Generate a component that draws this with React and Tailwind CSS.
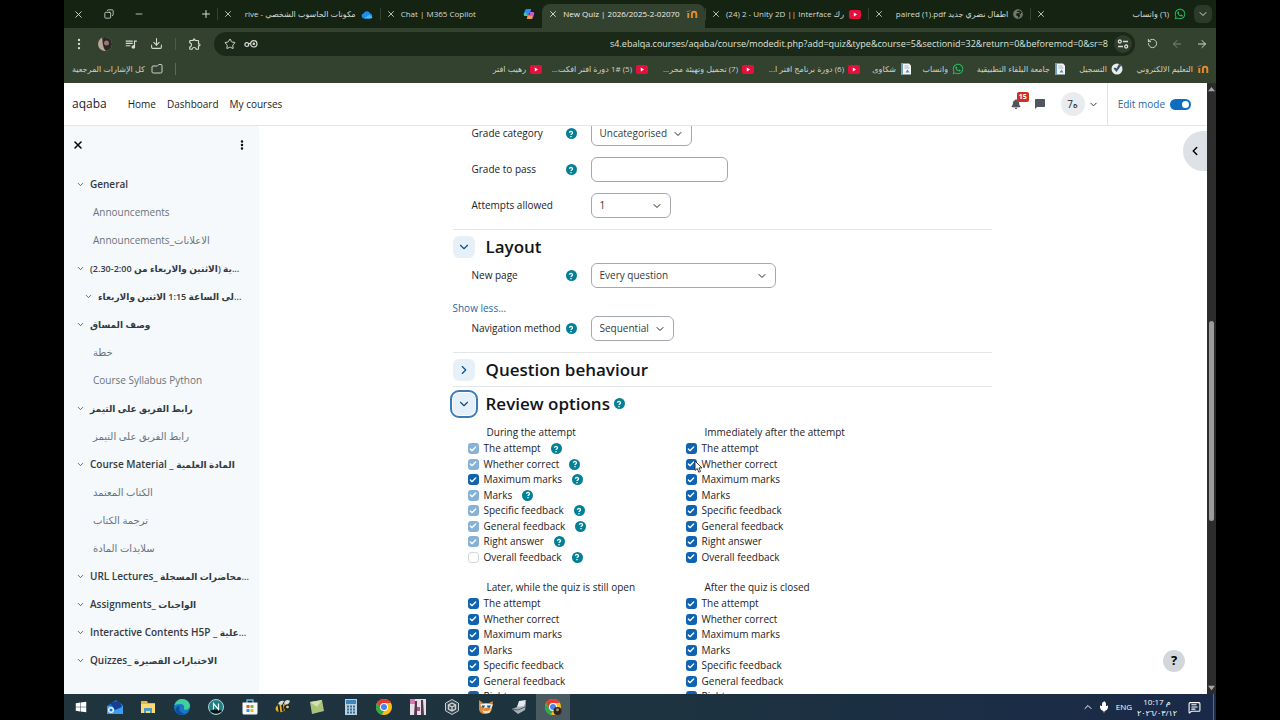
import React from "react";
import {
  X, Minus, Plus, Copy, ChevronDown, ChevronRight, ChevronLeft, ChevronUp, EllipsisVertical,
  Star, RotateCcw, ArrowRight, ArrowLeft, Folder, Check, Mic, MessageSquareText,
} from "lucide-react";
import { FaWhatsapp, FaYoutube, FaWindows, FaBell, FaGlobeAfrica } from "react-icons/fa";
import { MdChatBubble, MdOutlineExtension, MdQueueMusic } from "react-icons/md";
import { LuDownload } from "react-icons/lu";

/* ---------- small drawings ---------- */

const YouTube = () => (
  <svg viewBox="0 0 12 9" className="h-[9px] w-3 shrink-0">
    <rect width="12" height="9" rx="2" fill="#e60f3c" />
    <path d="M4.8 2.6v3.8L8 4.5z" fill="#fff" />
  </svg>
);

const Moodle = () => (
  <svg viewBox="0 0 12 10" className="h-[10px] w-3 shrink-0" fill="none" stroke="#e98a2b" strokeWidth="1.900">
    <path d="M2.300 4V9M5.900 9V5a2.200 2.200 0 0 1 4.400 0V9" />
    <path d="M0.400 2.800L4.600 1.500" stroke="#77776a" strokeWidth="1" />
  </svg>
);

const OneDrive = () => (
  <svg viewBox="0 0 12 9" className="h-[9px] w-3 shrink-0">
    <path d="M3 8.500a2.700 2.700 0 0 1-.3-5.300A3.600 3.600 0 0 1 9.300 3.500 2.600 2.600 0 0 1 9.400 8.500z" fill="#1d8df0" />
    <path d="M3 8.500 8 4.800l3.500 2.400A2.400 2.400 0 0 1 9.400 8.500z" fill="#45b9ff" />
  </svg>
);

const CopilotLogo = () => (
  <svg viewBox="0 0 12 12" className="size-3 shrink-0">
    <path d="M4 1h4.200l-1 3.400c-.4 1.300-.8 2.300-1.600 3.600H2C.8 8 .6 6.800 1 5.500l1-3C2.400 1.500 3 1 4 1z" fill="#2b8df5" />
    <path d="M1 5.500 2.500 4l2.500 4H2C.8 8 .6 6.800 1 5.500z" fill="#41c9a4" />
    <path d="M8 11H3.800l1-3.400C5.200 6.300 5.600 5.300 6.400 4H10c1.200 0 1.400 1.200 1 2.500l-1 3C9.600 10.500 9 11 8 11z" fill="#c65bd9" />
    <path d="M8 11H3.800l1-3.400 4.700.7-.5 1.900c-.2.500-.5.800-1 .8z" fill="#f59a4b" />
    <path d="m5.300 6.800 1.100-2.300.9.200-1 2.600z" fill="#33412f" />
  </svg>
);

const DocIcon = () => (
  <svg viewBox="0 0 12 12" className="size-3 shrink-0">
    <path d="M1 .5h8l2 2v9H1z" fill="#f3f6f7" />
    <path d="M1 .5h2v11H1z" fill="#6f9dc4" />
    <path d="M4.500 3h4M4.500 5h5" stroke="#a9b6be" />
    <path d="m5.500 9.500 2-3 2 3z" fill="#5b86b5" />
  </svg>
);

const Registration = () => (
  <svg viewBox="0 0 12 12" className="size-3 shrink-0">
    <circle cx="6" cy="6" r="5.500" fill="#e8ecee" />
    <path d="M2.500 5.500 5.500 9l5-7A5.500 5.500 0 0 0 8 1L5.500 5.500l-1.500-1z" fill="#3d5568" />
  </svg>
);

const SiteSettings = () => (
  <svg viewBox="0 0 12 10" className="h-[10px] w-3" fill="none" stroke="currentColor" strokeWidth="1.300">
    <circle cx="2.800" cy="2.500" r="1.500" />
    <path d="M6 2.500h5M1 7.500h5" />
    <circle cx="9.200" cy="7.500" r="1.500" />
  </svg>
);

const PassKey = () => (
  <svg viewBox="0 0 14 10" className="h-[10px] w-[14px]" fill="none" stroke="currentColor" strokeWidth="1.200">
    <circle cx="2.800" cy="5.600" r="1.900" />
    <path d="M4.700 4.500h2" />
    <circle cx="9.800" cy="4.800" r="3.200" />
    <circle cx="9.800" cy="4.800" r=".7" fill="currentColor" />
  </svg>
);

const ChromeLogo = ({ badge }) => (
  <svg viewBox="0 0 18 18" className="size-[18px]">
    <circle cx="9" cy="9" r="8" fill="#fbc116" />
    <path d="M2.070 5A8 8 0 0 1 15.930 5H9L5.500 11z" fill="#e33b2e" />
    <path d="M2.070 5 5.540 11 9 13l-2.300 3.900A8 8 0 0 1 2.070 5z" fill="#2da94f" />
    <circle cx="9" cy="9" r="4" fill="#fff" />
    <circle cx="9" cy="9" r="3" fill="#4285f4" />
    {badge && <circle cx="13.500" cy="13" r="4" fill="#2a2523" />}
    {badge && <circle cx="13.500" cy="11.800" r="1.500" fill="#b28d76" />}
  </svg>
);

const Help = () => (
  <button type="button" aria-label="Help" className="grid size-[11px] shrink-0 place-items-center rounded-full bg-[#008196]">
    <svg viewBox="0 0 8 8" className="size-2" fill="none" stroke="#fff" strokeWidth="1.300">
      <path d="M2.500 2.800a1.500 1.400 0 1 1 2.300 1.200c-.6.400-.8.500-.8 1.100M4 6v1.200" />
    </svg>
  </button>
);

/* ---------- browser frame ---------- */

const tabs = [
  { title: "(٦) واتساب", dir: "rtl", icon: <FaWhatsapp className="size-3 shrink-0 text-[#27c062]" /> },
  { title: "اطفال نضري جديد paired (1).pdf", dir: "rtl", icon: <FaGlobeAfrica className="size-[10px] shrink-0 text-[#6f7a6d]" /> },
  { title: "(24) 2 - Unity 2D || Interface رك", dir: "ltr", icon: <YouTube /> },
  { title: "New Quiz | 2026/2025-2-02070", dir: "ltr", icon: <Moodle />, active: true },
  { title: "Chat | M365 Copilot", dir: "ltr", icon: <CopilotLogo /> },
  { title: "مكونات الحاسوب الشخصي - rive", dir: "rtl", icon: <OneDrive /> },
];

function TabStrip() {
  return (
    <div dir="rtl" className="flex h-7 shrink-0 items-center bg-[#152313] text-[#d5dbd2]">
      <button aria-label="Search tabs" className="mr-1 ml-[1px] grid size-[18px] place-items-center rounded-md bg-[#2c3a2a]">
        <ChevronDown className="size-3" />
      </button>
      <div role="tablist" className="flex h-full min-w-0 flex-1 items-end">
        {tabs.map((t) => (
          <div
            key={t.title}
            role="tab"
            aria-selected={!!t.active}
            className={
              "flex h-6 min-w-0 flex-1 items-center gap-[5px] pr-[7px] pb-1 pl-[6px] text-[8px] " +
              (t.active ? "rounded-t-lg bg-[#33412f] text-[#edf0eb]" : "")
            }
          >
            {t.icon}
            <span dir={t.dir} className="min-w-0 flex-1 whitespace-nowrap">{t.title}</span>
            <button aria-label="Close tab"><X className="size-[10px]" /></button>
            {!t.active && <span className="-ml-[6px] h-3 w-px bg-[#35432f]" />}
          </div>
        ))}
      </div>
      <button aria-label="New tab" className="ml-[56px] pr-[5px]"><Plus className="size-3" /></button>
      <div className="flex items-center gap-5 pl-[9px]">
        <button aria-label="Minimise"><Minus className="size-[10px]" /></button>
        <button aria-label="Restore"><Copy className="size-[10px] -scale-x-100" /></button>
        <button aria-label="Close"><X className="size-[11px]" /></button>
      </div>
    </div>
  );
}

function Toolbar() {
  return (
    <div dir="rtl" className="flex h-[31px] shrink-0 items-center bg-[#33412f] text-[#d5dbd2]">
      <div className="flex items-center gap-[13px] pr-2 pl-3">
        <button aria-label="Back"><ArrowRight className="size-3" /></button>
        <button aria-label="Forward" className="text-[#7c8778]"><ArrowLeft className="size-3" /></button>
        <button aria-label="Reload"><RotateCcw className="size-[11px]" /></button>
      </div>
      <div className="flex h-6 min-w-0 flex-1 items-center gap-2 rounded-full bg-[#1b2919] pr-[3px] pl-[10px]">
        <button aria-label="Site settings" className="-ml-[2px] grid size-[18px] place-items-center rounded-full bg-[#2f3d2c]">
          <SiteSettings />
        </button>
        <input
          aria-label="Address"
          dir="ltr"
          className="min-w-0 flex-1 bg-transparent text-right text-[9px] text-[#dfe5dc] outline-none"
          defaultValue="s4.ebalqa.courses/aqaba/course/modedit.php?add=quiz&type&course=5&sectionid=32&return=0&beforemod=0&sr=8"
        />
        <button aria-label="Passwords"><PassKey /></button>
        <button aria-label="Bookmark"><Star className="size-3" /></button>
      </div>
      <div className="flex items-center gap-3 pr-3 pl-2">
        <button aria-label="Extensions"><MdOutlineExtension className="size-[14px]" /></button>
        <span className="h-3 w-px bg-[#4c5b47]" />
        <button aria-label="Downloads"><LuDownload className="size-[13px]" /></button>
        <button aria-label="Media"><MdQueueMusic className="size-[14px]" /></button>
        <button aria-label="Profile" className="grid size-[14px] place-items-center overflow-hidden rounded-full bg-[#b9a79c]">
          <svg viewBox="0 0 14 14" className="size-[14px]">
            <path d="M4 0h10v14H8C4 10 5 4 4 0z" fill="#2a2725" />
            <circle cx="8.500" cy="6" r="2.500" fill="#937a6d" />
          </svg>
        </button>
        <button aria-label="Menu"><EllipsisVertical className="size-[14px]" /></button>
      </div>
    </div>
  );
}

const bookmarks = [
  { t: "التعليم الالكتروني", w: "w-[86px]", icon: <Moodle /> },
  { t: "التسجيل", w: "w-[57px]", icon: <Registration /> },
  { t: "جامعة البلقاء التطبيقية", w: "w-[102px]", icon: <DocIcon /> },
  { t: "واتساب", w: "w-[52px]", icon: <FaWhatsapp className="size-3 shrink-0 text-[#27c062]" /> },
  { t: "شكاوى", w: "w-[52px]", icon: <DocIcon /> },
  { t: "(6) دورة برنامج افتر ا...", w: "w-[106px]", icon: <YouTube /> },
  { t: "(7) تحميل وتهيئة محر...", w: "w-[106px]", icon: <YouTube /> },
  { t: "(5) 1# دورة افتر افكت...", w: "w-[106px]", icon: <YouTube /> },
  { t: "رهيب افتر", w: "w-[60px]", icon: <YouTube /> },
];

function BookmarkBar() {
  return (
    <div dir="rtl" className="flex h-6 shrink-0 items-center bg-[#33412f] pr-[7px] pb-1 pl-2 text-[8px] text-[#ccd3c8]">
      {bookmarks.map((b) => (
        <a key={b.t} href="#" className={"flex shrink-0 items-center gap-1 whitespace-nowrap " + b.w}>
          {b.icon}
          <span>{b.t}</span>
        </a>
      ))}
      <span className="mr-auto h-3 w-px bg-[#5c6b56]" />
      <a href="#" className="mr-3 flex items-center gap-[6px] whitespace-nowrap">
        <Folder className="size-3 -scale-x-100" />
        <span>كل الإشارات المرجعية</span>
      </a>
    </div>
  );
}

/* ---------- site ---------- */

function NavBar() {
  return (
    <header className="flex h-[43px] shrink-0 items-center border-b border-[#e3e6e9] bg-white pl-2 text-[10px] text-[#1d2125]">
      <a href="#" className="text-[12px]">aqaba</a>
      <nav className="ml-[21px] flex gap-[11px]">
        <a href="#">Home</a>
        <a href="#">Dashboard</a>
        <a href="#">My courses</a>
      </nav>
      <div className="ml-auto flex h-full items-center">
        <button aria-label="Notifications" className="relative">
          <FaBell className="size-[10px] text-[#50565c]" />
          <span className="absolute -top-[7px] left-[6px] rounded-[2px] bg-[#ca3120] px-[2px] text-[7px] leading-[10px] font-bold text-white">15</span>
        </button>
        <button aria-label="Messages" className="ml-[13px]"><MdChatBubble className="size-3 text-[#50565c]" /></button>
        <button className="ml-[15px] flex items-center gap-[3px]" aria-label="User menu">
          <span className="grid size-6 place-items-center rounded-full bg-[#e9ecef] text-[10px]">7ه</span>
          <ChevronDown className="size-[11px]" />
        </button>
        <label className="ml-2 flex h-full items-center gap-[5px] border-l border-[#dee2e6] pr-4 pl-[10px] text-[#2568ac]">
          Edit mode
          <span className="grid items-center">
            <input type="checkbox" role="switch" defaultChecked className="col-start-1 row-start-1 h-[11px] w-[21px] appearance-none rounded-full bg-[#0f6cbf]" />
            <span className="pointer-events-none col-start-1 row-start-1 mr-[2px] size-[7px] justify-self-end rounded-full bg-white" />
          </span>
        </label>
      </div>
    </header>
  );
}

const index = [
  { t: "General", head: true },
  { t: "Announcements" },
  { t: "Announcements_الاعلانات" },
  { ar: "...ية (الاثنين والاربعاء من 2:00-2.30)", head: true, rtl: true },
  { ar: "...لى الساعة 1:15 الاثنين والاربعاء", head: true, rtl: true, nested: true },
  { ar: "وصف المساق", head: true },
  { t: "خطة" },
  { t: "Course Syllabus Python" },
  { ar: "رابط الفريق على التيمز", head: true },
  { t: "رابط الفريق على التيمز" },
  { t: "Course Material _ ", ar: "المادة العلمية", head: true },
  { t: "الكتاب المعتمد" },
  { t: "ترجمة الكتاب" },
  { t: "سلايدات المادة" },
  { t: "URL Lectures_ ", ar: "محاضرات المسجلة...", head: true },
  { t: "Assignments_ ", ar: "الواجبات", head: true },
  { t: "Interactive Contents H5P _ ", ar: "علية...", head: true },
  { t: "Quizzes_ ", ar: "الاختبارات القصيرة", head: true },
];

function CourseIndex() {
  return (
    <aside className="w-[195px] shrink-0 overflow-hidden bg-[#f5f9fb] text-[10px] text-[#343a40]">
      <div className="flex h-[38px] items-center justify-between pr-[11px] pl-2 text-black">
        <button aria-label="Close course index"><X className="size-3" strokeWidth={3} /></button>
        <button aria-label="Course index options"><EllipsisVertical className="size-3" strokeWidth={3} /></button>
      </div>
      <ul className="pt-[6px]">
        {index.map((it, i) => (
          <li key={i} className={"flex h-7 items-center whitespace-nowrap " + (it.nested ? "pl-5" : it.head ? "pl-3" : "pl-7")}>
            {it.head && (
              <button aria-label="Collapse" className="mr-[5px]"><ChevronDown className="size-[9px]" /></button>
            )}
            <a href="#" dir={it.rtl ? "rtl" : "ltr"} className={it.head ? "font-semibold" : "pl-px text-[#6a737b]"}>
              {it.t}
              {it.ar && <span className="text-[9px]">{it.ar}</span>}
            </a>
          </li>
        ))}
      </ul>
    </aside>
  );
}

function Select({ id, value, width }) {
  return (
    <span className={"grid items-center " + width}>
      <select id={id} className="col-start-1 row-start-1 h-[25px] w-full appearance-none rounded-md border border-[#a3a8ae] bg-white pl-2 text-[10px] text-[#343a40]">
        <option>{value}</option>
      </select>
      <ChevronDown className="pointer-events-none col-start-1 row-start-1 mr-2 size-3 justify-self-end" />
    </span>
  );
}

function Field({ id, label, help, children }) {
  return (
    <div className="flex items-center pl-[19px]">
      <label htmlFor={id} className="w-[94px] shrink-0 whitespace-nowrap">{label}</label>
      <span className="w-[25px] shrink-0">{help && <Help />}</span>
      {children}
    </div>
  );
}

function SectionHead({ title, open, focused, help }) {
  const Icon = open ? ChevronDown : ChevronRight;
  return (
    <div className="flex h-[33px] items-center">
      <button
        type="button"
        aria-label={title}
        aria-expanded={!!open}
        className={
          "grid size-[22px] place-items-center rounded-md bg-[#e6f0f9] text-[#0f4f8c] " +
          (focused ? "outline-2 outline-offset-1 outline-[#3a7cb8]" : "")
        }
      >
        <Icon className="size-[14px]" />
      </button>
      <h3 className="ml-[11px] text-[17px] leading-6 font-semibold text-[#111418]">{title}</h3>
      {help && <span className="ml-1"><Help /></span>}
    </div>
  );
}

const rows = ["The attempt", "Whether correct", "Maximum marks", "Marks", "Specific feedback", "General feedback", "Right answer", "Overall feedback"];

function Pointer() {
  return (
    <svg viewBox="0 0 9 13" className="absolute top-[3px] left-2 h-[13px] w-[9px]">
      <path d="M1 1v9.500l2.300-2 1.500 3.700 1.700-.7L5 7.900h3z" fill="#fff" stroke="#222" strokeWidth=".9" />
    </svg>
  );
}

function ReviewGroup({ title, during, pointerAt }) {
  return (
    <fieldset className="min-w-0">
      <legend className="flex h-[21px] items-center pt-[3px] pl-[19px]">{title}</legend>
      <div className="flex h-[124px] flex-col">
        {rows.map((r, i) => {
          const empty = during && i === 7;
          const dim = during && i !== 2 && i !== 7;
          return (
            <div key={r} className="relative flex flex-1 items-center">
              <label className="flex items-center gap-[5px] leading-[15px]">
                <span className="grid place-items-center">
                  <input
                    type="checkbox"
                    defaultChecked={!empty}
                    disabled={dim || empty}
                    className={
                      "col-start-1 row-start-1 size-[11px] appearance-none rounded-[3px] " +
                      (empty ? "border border-[#d3d8dd] bg-white" : dim ? "bg-[#87b2d8]" : "bg-[#0f63b0]")
                    }
                  />
                  {!empty && <Check className="pointer-events-none col-start-1 row-start-1 size-2 text-white" strokeWidth={4} />}
                </span>
                {r}
              </label>
              {during && <span className="ml-[10px]"><Help /></span>}
              {pointerAt === i && <Pointer />}
            </div>
          );
        })}
      </div>
    </fieldset>
  );
}

function QuizForm() {
  return (
    <form className="mx-auto -mt-[5px] w-full max-w-[539px] text-[10px] text-[#1d2125]">
      <div className="flex flex-col gap-[11px] pb-[11px]">
        <Field id="cat" label="Grade category" help><Select id="cat" value="Uncategorised" width="w-[101px]" /></Field>
        <Field id="pass" label="Grade to pass" help>
          <input id="pass" type="text" className="h-[25px] w-[137px] rounded-md border border-[#a3a8ae] px-2" />
        </Field>
        <Field id="att" label="Attempts allowed"><Select id="att" value="1" width="w-[80px]" /></Field>
      </div>
      <section className="border-t border-[#e3e6e9] pb-[11px]">
        <SectionHead title="Layout" open />
        <Field id="page" label="New page" help><Select id="page" value="Every question" width="w-[185px]" /></Field>
        <a href="#" className="flex h-7 items-center pt-3 text-[#2568ac]">Show less...</a>
        <Field id="nav" label="Navigation method" help><Select id="nav" value="Sequential" width="w-[83px]" /></Field>
      </section>
      <section className="border-t border-[#e3e6e9]">
        <SectionHead title="Question behaviour" />
      </section>
      <section className="border-t border-[#e3e6e9]">
        <SectionHead title="Review options" open focused help />
        <div className="grid grid-cols-[218px_1fr] gap-y-[10px] pl-[15px]">
          <ReviewGroup title="During the attempt" during />
          <ReviewGroup title="Immediately after the attempt" pointerAt={1} />
          <ReviewGroup title="Later, while the quiz is still open" />
          <ReviewGroup title="After the quiz is closed" />
        </div>
      </section>
    </form>
  );
}

/* ---------- taskbar ---------- */

const apps = [
  ["Start", <FaWindows className="size-3 text-white" />],
  ["Mail", <svg viewBox="0 0 18 18" className="size-[18px]"><path d="M1 8 10 2l7 5v9H1z" fill="#1c6fd0" /><path d="M1 8h16v8H1z" fill="#3f9cf0" /><path d="m4 5 9-2 3 6-7 3z" fill="#153f8f" /><circle cx="5" cy="12" r="3" fill="#e8f3ff" /><circle cx="5" cy="12" r="1.500" fill="#1c6fd0" /></svg>],
  ["File Explorer", <svg viewBox="0 0 18 18" className="size-[18px]"><path d="M2 3h6l1 2h7v10H2z" fill="#eab53e" /><path d="M2 6h14v9H2z" fill="#fbd973" /><path d="M5 10h8v5h-2v-2H7v2H5z" fill="#4b98c9" /></svg>],
  ["Edge", <svg viewBox="0 0 18 18" className="size-[18px]"><circle cx="9" cy="9" r="8" fill="#1976c8" /><path d="M1.500 7.500C2.500 3.500 5.500 1 9 1c4.500 0 8 3.200 8 6.800 0 2.700-2.300 3.900-4.500 3.900-1.500 0-2-.6-1.500-1.500C12 8 10 6 7 6 4.500 6 2.500 7 1.500 7.500z" fill="#3fcf9b" /><path d="M7 8c-2 3 0 7 4.500 7.500A6 6 0 0 1 5 16C1 13 2 8 7 8z" fill="#0c4f9e" /></svg>],
  ["NetBeans", <svg viewBox="0 0 18 18" className="size-[18px]"><circle cx="9" cy="9" r="7.500" fill="#1e7f85" stroke="#b8d3d4" /><path d="M3 13a7 5 0 0 0 12 0c-3-2-9-2-12 0z" fill="#0a1214" /><path d="M6.500 11.500v-6l5 6v-6" fill="none" stroke="#e9f5f5" strokeWidth="1.200" /></svg>],
  ["Store", <svg viewBox="0 0 18 18" className="size-[18px]"><path d="M6 5V2h6v3" fill="none" stroke="#6db7e8" strokeWidth="1.300" /><path d="M1.500 4.500h15V15a1.500 1.500 0 0 1-1.500 1.500H3A1.500 1.500 0 0 1 1.500 15z" fill="#f7f8f9" /><path d="M5.500 7h3v3h-3z" fill="#ee5325" /><path d="M9.500 7h3v3h-3z" fill="#7cb928" /><path d="M5.500 11h3v3h-3z" fill="#1f9de8" /><path d="M9.500 11h3v3h-3z" fill="#f7b718" /></svg>],
  ["Bee", <svg viewBox="0 0 18 18" className="size-[18px]"><ellipse cx="7" cy="10" rx="5.500" ry="4" fill="#e5b22c" transform="rotate(-15 7 10)" /><path d="m4.500 7 1 7M8 6l1 7" stroke="#20221a" strokeWidth="1.800" /><path d="M4 6c1-3 4-4 6-3l-2 4zM10 5c1-3 4-4 6-2-1 3-3 4-5 4z" fill="#d9ded3" /><circle cx="13" cy="9.500" r="3" fill="#26261a" /><circle cx="13.500" cy="9" r="1.300" fill="#f4dc71" /></svg>],
  ["Notes", <svg viewBox="0 0 18 18" className="size-[18px]"><path d="m2 4 12-2 2 11-12 3z" fill="#a9c47a" /><path d="m2 4 12-2-5 7z" fill="#d2e1ab" /></svg>],
  ["Calculator", <svg viewBox="0 0 18 18" className="size-[18px]"><path d="M3 1h12v16H3z" fill="#b9d2e2" /><path d="M4 2h10v4H4z" fill="#3c86c0" /><path d="M5 8.500h8M5 11.500h8M5 14.500h8" stroke="#3d6c91" strokeWidth="1.800" strokeDasharray="2 1" /></svg>],
  ["Chrome", <ChromeLogo />],
  ["Photo editor", <svg viewBox="0 0 18 18" className="size-[18px]"><path d="M1 1h16v16H1z" fill="#eadde7" /><path d="M1 1h5v5H1z" fill="#d977ae" /><path d="M6 3h2v14H5zM12 2h2l1 15h-3z" fill="#4d3a50" /><path d="M8 9h3v4H8z" fill="#b25289" /></svg>],
  ["Unity Hub", <svg viewBox="0 0 18 18" className="size-[18px]" fill="none" stroke="#c9d2d6"><path d="m9 1.500 6.500 3.700v7.600L9 16.500l-6.500-3.700V5.200z" fill="#3a474d" /><path d="m9 5 3.500 2v4L9 13l-3.500-2V7zM9 9v4M9 9 5.500 7M9 9l3.500-2" strokeWidth="1.400" /></svg>],
  ["Scratch", <svg viewBox="0 0 18 18" className="size-[18px]"><path d="m2 2 4 3h6l4-2-1 7c0 4-4 6-7 6s-6-2-6-5z" fill="#e08a34" /><path d="M3 6.500c4-1 8-1 13 0l-2 4-4-1-4 1z" fill="#edf4f6" /><path d="M5 7.500h3l-1 2.500-2-.5zM10 7.500h4L12.500 10l-2-.5z" fill="#2e556f" /><path d="M5 12c3 2 7 1 9-1l-1.500 4H7z" fill="#f3dfc0" /></svg>],
  ["Scanner", <svg viewBox="0 0 18 18" className="size-[18px]"><path d="m2 11 5-2 9-5-1 8-7 4z" fill="#a7b1b8" /><path d="m7 9 2-6 7-1-2 6z" fill="#e6ebee" /><path d="m2 11 6 1 7-3" fill="none" stroke="#56646d" /></svg>],
  ["Chrome profile", <ChromeLogo badge />],
];

function Taskbar() {
  return (
    <footer className="flex h-[26px] shrink-0 items-center justify-between bg-linear-to-r from-[#1f343c] via-[#1d333f] to-[#1a2948] text-white">
      <div className="flex h-full w-[506px]">
        {apps.map(([name, icon], i) => (
          <button key={name} aria-label={name} className={"grid h-full flex-1 place-items-center " + (i === 14 ? "bg-[#4a5a61]" : "")}>
            {icon}
          </button>
        ))}
      </div>
      <div className="flex h-full items-center">
        <ChevronUp className="size-3" />
        <Mic className="ml-1 size-3" fill="currentColor" />
        <span className="ml-[6px] text-[8px]">ENG</span>
        <span className="ml-[6px] flex w-[38px] flex-col items-center text-[8px] leading-[11px] whitespace-nowrap">
          <span dir="ltr">10:17 م</span>
          <span dir="ltr">٢٠٢٦/٠٣/١٢</span>
        </span>
        <MessageSquareText className="mr-3 ml-3 size-[13px]" />
        <span className="mr-[2px] h-full w-px bg-[#5a6a83]" />
      </div>
    </footer>
  );
}

export default function App() {
  return (
    <div className="h-screen overflow-hidden bg-black px-[5%] font-['Open_Sans','DejaVu_Sans',sans-serif]">
      <div className="flex h-full flex-col">
        <TabStrip />
        <Toolbar />
        <BookmarkBar />
        <div className="flex min-h-0 flex-1">
          <div className="relative flex min-w-0 flex-1 flex-col bg-white">
            <NavBar />
            <div className="flex min-h-0 flex-1">
              <CourseIndex />
              <main className="min-w-0 flex-1 overflow-hidden pr-[22px]">
                <QuizForm />
              </main>
            </div>
            <button aria-label="Open block drawer" className="absolute top-12 right-0 grid h-10 w-6 place-items-center rounded-l-full bg-[#dee2e6] text-black">
              <ChevronLeft className="size-[14px]" strokeWidth={2.5} />
            </button>
            <button aria-label="Page help" className="absolute right-[22px] bottom-[22px] grid size-[22px] place-items-center rounded-full bg-[#d3d7db] text-[13px] font-bold text-black">?</button>
          </div>
          <div className="flex w-[9px] shrink-0 flex-col items-center bg-[#2b2c2b]">
            <svg viewBox="0 0 8 8" className="my-[3px] size-[7px] shrink-0"><path d="M0 6h8L4 1z" fill="#a5a5a5" /></svg>
            <div className="flex w-[5px] flex-1 flex-col">
              <div className="flex-[225]" />
              <div className="flex-[200] rounded-full bg-[#9b9b9b]" />
              <div className="flex-[160]" />
            </div>
            <svg viewBox="0 0 8 8" className="my-[3px] size-[7px] shrink-0"><path d="M0 2h8L4 7z" fill="#a5a5a5" /></svg>
          </div>
        </div>
        <Taskbar />
      </div>
    </div>
  );
}
